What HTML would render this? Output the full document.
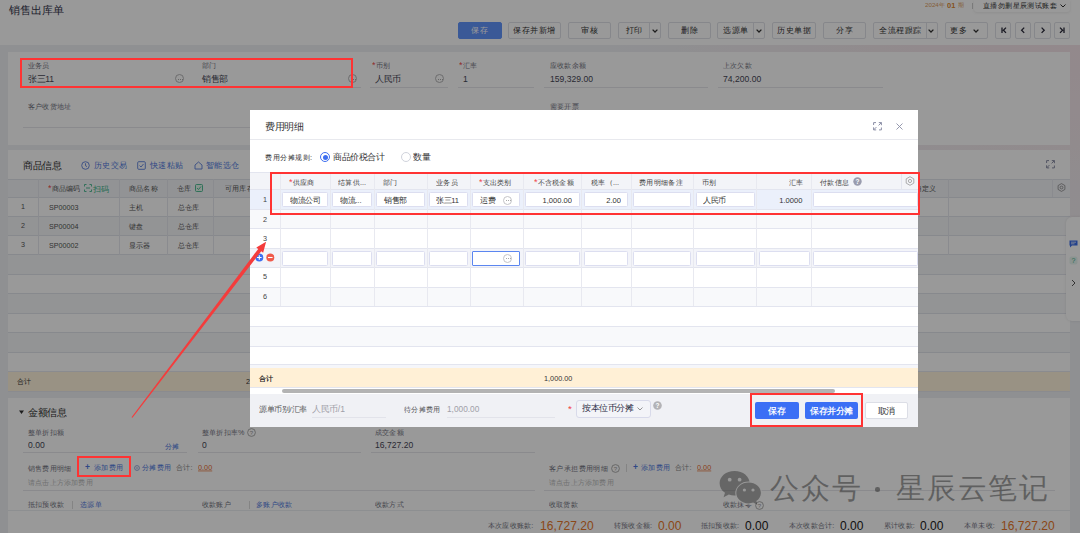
<!DOCTYPE html>
<html><head><meta charset="utf-8">
<style>
*{box-sizing:border-box;margin:0;padding:0}
html,body{width:1080px;height:533px;overflow:hidden}
body{position:relative;background:radial-gradient(ellipse 480px 320px at 100% 0%, #f6e2e8 0%, #f2e8ec 45%, #eef0f4 100%);font-family:"Liberation Sans",sans-serif;color:#333;}
.a{position:absolute}
.t{position:absolute;white-space:nowrap;line-height:1}
.lbl{font-size:7.2px;color:#727280}
.val{font-size:8.6px;color:#464656}
.ul{position:absolute;height:1px;background:#e6e7ec}
.btn{position:absolute;top:22px;height:17px;border:1px solid #e0e2e8;border-radius:2px;background:#fff;font-size:8.3px;line-height:15px;text-align:center;color:#333}
.sep{position:absolute;top:0;bottom:0;width:1px;background:#e0e2e8}
.dots{position:absolute;width:9px;height:9px;border:1px solid #b5b5b8;border-radius:50%;margin-top:-0.7px}
.dots:after{content:"";position:absolute;left:1.5px;top:3.2px;width:1px;height:1px;background:#aaa;box-shadow:2px 0 #aaa,4px 0 #aaa}
.blue{color:#5079e0}
.red{color:#f04848;font-size:1.25em;line-height:0}
.card{position:absolute;left:8px;width:1062px;background:#fff}
.hl{position:absolute;left:8px;width:1062px;height:1px;background:#e2e4ec}
.vl{position:absolute;width:1px;background:#e6e8ee}
</style></head><body>

<!-- ===== HEADER ===== -->
<div class="a" style="left:0;top:0;width:1080px;height:45px;background:#fff"></div>
<div class="t" style="left:9px;top:5.3px;color:#33334a;font-size:110px;transform-origin:0 0;transform:scale(0.1,0.1)">销售出库单</div>
<div class="a" style="left:974px;top:0;width:96px;height:12px;background:#fff;border-radius:0 0 3px 3px;box-shadow:0 1px 3px rgba(0,0,0,.08)"></div>
<div class="t" style="left:924.7px;top:2.3px;color:#e0a060;font-size:62px;transform-origin:0 0;transform:scale(0.1,0.1)">2024年</div><div class="t" style="left:947px;top:2px;font-weight:bold;color:#e08a30;font-size:75px;transform-origin:0 0;transform:scale(0.1,0.1)">01</div><div class="t" style="left:958.3px;top:2.3px;color:#e0a060;font-size:62px;transform-origin:0 0;transform:scale(0.1,0.1)">期</div>
<div class="a" style="left:972px;top:2.5px;width:1px;height:6px;background:#ccc"></div>
<div class="t" style="left:983px;top:2px;color:#333;font-size:74px;transform-origin:0 0;transform:scale(0.1,0.1)">直播勿删星辰测试账套</div>
<svg class="a" style="left:1060px;top:3.5px" width="6" height="4" viewBox="0 0 6 4"><path d="M0.5 0.5 L3 3 L5.5 0.5" fill="none" stroke="#333" stroke-width="1"/></svg>

<div class="btn" style="left:458px;width:43.5px;background:#6294fc;border-color:#6294fc"><div class="t" style="left:0;top:0;width:415px;line-height:150px;text-align:center;color:#fff;font-size:85px;transform-origin:0 0;transform:scale(0.1,0.1)">保存</div></div>
<div class="btn" style="left:508px;width:52.5px;"><div class="t" style="left:0;top:0;width:505px;line-height:150px;text-align:center;color:#333;font-size:85px;transform-origin:0 0;transform:scale(0.1,0.1)">保存并新增</div></div>
<div class="btn" style="left:567.5px;width:43px;"><div class="t" style="left:0;top:0;width:410px;line-height:150px;text-align:center;color:#333;font-size:85px;transform-origin:0 0;transform:scale(0.1,0.1)">审核</div></div>
<div class="btn" style="left:617.5px;width:43px;"><div class="t" style="left:0;top:0;width:305px;line-height:150px;text-align:center;color:#333;font-size:85px;transform-origin:0 0;transform:scale(0.1,0.1)">打印</div><div class="sep" style="left:30.2px"></div><svg class="a" style="left:33.3px;top:5.8px" width="6" height="4" viewBox="0 0 6 4"><path d="M0.6 0.6 L3 3 L5.4 0.6" fill="none" stroke="#333" stroke-width="1.3"/></svg></div>
<div class="btn" style="left:667.5px;width:43px;"><div class="t" style="left:0;top:0;width:410px;line-height:150px;text-align:center;color:#333;font-size:85px;transform-origin:0 0;transform:scale(0.1,0.1)">删除</div></div>
<div class="btn" style="left:717px;width:48px;"><div class="t" style="left:0;top:0;width:360px;line-height:150px;text-align:center;color:#333;font-size:85px;transform-origin:0 0;transform:scale(0.1,0.1)">选源单</div><div class="sep" style="left:35.2px"></div><svg class="a" style="left:38px;top:5.8px" width="6" height="4" viewBox="0 0 6 4"><path d="M0.6 0.6 L3 3 L5.4 0.6" fill="none" stroke="#333" stroke-width="1.3"/></svg></div>
<div class="btn" style="left:771.5px;width:44.5px;"><div class="t" style="left:0;top:0;width:425px;line-height:150px;text-align:center;color:#333;font-size:85px;transform-origin:0 0;transform:scale(0.1,0.1)">历史单据</div></div>
<div class="btn" style="left:822.5px;width:43px;"><div class="t" style="left:0;top:0;width:410px;line-height:150px;text-align:center;color:#333;font-size:85px;transform-origin:0 0;transform:scale(0.1,0.1)">分享</div></div>
<div class="btn" style="left:872.5px;width:65px;"><div class="t" style="left:0;top:0;width:525px;line-height:150px;text-align:center;color:#333;font-size:85px;transform-origin:0 0;transform:scale(0.1,0.1)">全流程跟踪</div><div class="sep" style="left:52.8px"></div><svg class="a" style="left:54.7px;top:5.8px" width="6" height="4" viewBox="0 0 6 4"><path d="M0.6 0.6 L3 3 L5.4 0.6" fill="none" stroke="#333" stroke-width="1.3"/></svg></div>
<div class="btn" style="left:944.5px;width:43px;"><div class="t" style="left:4.5px;top:0;line-height:150px;color:#333;font-size:85px;transform-origin:0 0;transform:scale(0.1,0.1)">更多</div><svg class="a" style="left:27.8px;top:5.8px" width="6" height="4" viewBox="0 0 6 4"><path d="M0.6 0.6 L3 3 L5.4 0.6" fill="none" stroke="#333" stroke-width="1.3"/></svg></div>
<div class="btn" style="left:995.3px;width:16px"><svg class="a" style="left:4.5px;top:4px" width="6" height="6.5" viewBox="0 0 6 6.5"><path d="M1 0.5 V6 M5 0.6 L2.4 3.25 L5 5.9" fill="none" stroke="#2a2a3a" stroke-width="1.3"/></svg></div>
<div class="btn" style="left:1014.5px;width:16px"><svg class="a" style="left:4.8px;top:4px" width="6" height="6.5" viewBox="0 0 6 6.5"><path d="M4.2 0.6 L1.6 3.25 L4.2 5.9" fill="none" stroke="#2a2a3a" stroke-width="1.3"/></svg></div>
<div class="btn" style="left:1034px;width:16.5px"><svg class="a" style="left:5px;top:4px" width="6" height="6.5" viewBox="0 0 6 6.5"><path d="M1.6 0.6 L4.2 3.25 L1.6 5.9" fill="none" stroke="#2a2a3a" stroke-width="1.3"/></svg></div>
<div class="btn" style="left:1053.8px;width:16px"><svg class="a" style="left:4.5px;top:4px" width="6" height="6.5" viewBox="0 0 6 6.5"><path d="M5 0.5 V6 M1 0.6 L3.6 3.25 L1 5.9" fill="none" stroke="#2a2a3a" stroke-width="1.3"/></svg></div>

<!-- ===== CARD 1 ===== -->
<div class="card" style="top:52px;height:93px"></div>
<div class="t lbl" style="left:28px;top:62px;font-size:72px;transform-origin:0 0;transform:scale(0.1,0.1)">业务员</div>
<div class="t val" style="left:28px;top:74.5px;font-size:86px;transform-origin:0 0;transform:scale(0.1,0.1)">张三11</div>
<div class="dots" style="left:175px;top:75px"></div>
<div class="ul" style="left:23px;top:87px;width:165px"></div>
<div class="t lbl" style="left:202px;top:62px;font-size:72px;transform-origin:0 0;transform:scale(0.1,0.1)">部门</div>
<div class="t val" style="left:202px;top:74.5px;font-size:86px;transform-origin:0 0;transform:scale(0.1,0.1)">销售部</div>
<div class="dots" style="left:348px;top:75px"></div>
<div class="ul" style="left:197.5px;top:87px;width:163px"></div>
<div class="t lbl" style="left:372px;top:62px;font-size:72px;transform-origin:0 0;transform:scale(0.1,0.1)"><span class="red">*</span>币别</div>
<div class="t val" style="left:375px;top:74.5px;font-size:86px;transform-origin:0 0;transform:scale(0.1,0.1)">人民币</div>
<div class="dots" style="left:435px;top:75px"></div>
<div class="ul" style="left:370px;top:87px;width:77.5px"></div>
<div class="t lbl" style="left:459px;top:62px;font-size:72px;transform-origin:0 0;transform:scale(0.1,0.1)"><span class="red">*</span>汇率</div>
<div class="t val" style="left:463px;top:74.5px;font-size:86px;transform-origin:0 0;transform:scale(0.1,0.1)">1</div>
<div class="ul" style="left:457.5px;top:87px;width:76.5px"></div>
<div class="t lbl" style="left:549.5px;top:62px;font-size:72px;transform-origin:0 0;transform:scale(0.1,0.1)">应收款余额</div>
<div class="t val" style="left:549.5px;top:74.5px;font-size:86px;transform-origin:0 0;transform:scale(0.1,0.1)">159,329.00</div>
<div class="ul" style="left:544px;top:87px;width:163.5px"></div>
<div class="t lbl" style="left:723px;top:62px;font-size:72px;transform-origin:0 0;transform:scale(0.1,0.1)">上次欠款</div>
<div class="t val" style="left:723px;top:74.5px;font-size:86px;transform-origin:0 0;transform:scale(0.1,0.1)">74,200.00</div>
<div class="ul" style="left:718px;top:87px;width:164.5px"></div>
<div class="t lbl" style="left:28px;top:103px;font-size:72px;transform-origin:0 0;transform:scale(0.1,0.1)">客户收货地址</div>
<div class="ul" style="left:23px;top:127px;width:511px"></div>
<div class="t lbl" style="left:549.5px;top:103px;font-size:72px;transform-origin:0 0;transform:scale(0.1,0.1)">需要开票</div>

<!-- ===== CARD 2 (products) ===== -->
<div class="card" style="top:150px;height:241px"></div>
<div class="t" style="left:23px;top:160.5px;color:#333;font-size:96px;transform-origin:0 0;transform:scale(0.1,0.1)">商品信息</div>
<!-- links -->
<svg class="a" style="left:81px;top:161px" width="9" height="9" viewBox="0 0 9 9"><circle cx="4.5" cy="4.5" r="3.8" fill="none" stroke="#5b80dc" stroke-width="0.9"/><path d="M4.5 2.3 V4.7 L6 5.6" fill="none" stroke="#5b80dc" stroke-width="0.9"/></svg>
<div class="t blue" style="left:94px;top:161px;font-size:83px;transform-origin:0 0;transform:scale(0.1,0.1)">历史交易</div>
<svg class="a" style="left:137px;top:161px" width="9" height="9" viewBox="0 0 9 9"><rect x="0.7" y="0.7" width="7.6" height="7.6" rx="1" fill="none" stroke="#5b80dc" stroke-width="0.9"/><path d="M2.5 4.5 L4 6 L6.5 3" fill="none" stroke="#5b80dc" stroke-width="0.9"/></svg>
<div class="t blue" style="left:149.5px;top:161px;font-size:83px;transform-origin:0 0;transform:scale(0.1,0.1)">快速粘贴</div>
<svg class="a" style="left:194px;top:161px" width="9" height="9" viewBox="0 0 9 9"><path d="M1 8 V4 L4.5 1 L8 4 V8 Z" fill="none" stroke="#5b80dc" stroke-width="0.9"/></svg>
<div class="t blue" style="left:205.5px;top:161px;font-size:83px;transform-origin:0 0;transform:scale(0.1,0.1)">智能选仓</div>
<svg class="a" style="left:1046px;top:160px" width="9" height="8.5" viewBox="0 0 9 8.5"><path d="M0.6 3 V0.6 H3 M5.8 0.6 H8.4 V3.2 M8.4 0.6 L5.6 3.4 M0.6 5.3 V7.9 H3.2 M0.6 7.9 L3.4 5.1 M8.4 5.5 V7.9 H6" fill="none" stroke="#8b8ea6" stroke-width="1"/></svg>

<!-- table header -->
<div class="a" style="left:8px;top:179px;width:1062px;height:18px;background:#f4f5f9"></div>
<div class="hl" style="top:179px"></div>
<div class="hl" style="top:197px"></div>
<div class="vl" style="left:38.25px;top:179px;height:76px"></div>
<div class="vl" style="left:119.25px;top:179px;height:76px"></div>
<div class="vl" style="left:167.25px;top:179px;height:76px"></div>
<div class="vl" style="left:213.25px;top:179px;height:76px"></div>
<div class="vl" style="left:948px;top:179px;height:76px"></div>
<div class="vl" style="left:1052px;top:179px;height:18px"></div>
<div class="t lbl" style="left:47.5px;top:185px;color:#555;font-size:72px;transform-origin:0 0;transform:scale(0.1,0.1)"><span class="red">*</span>商品编码</div>
<svg class="a" style="left:84px;top:184px" width="8" height="8" viewBox="0 0 8 8"><path d="M0.5 2.5 V0.5 H2.5 M5.5 0.5 H7.5 V2.5 M7.5 5.5 V7.5 H5.5 M2.5 7.5 H0.5 V5.5 M2 4 H6" fill="none" stroke="#40b58a" stroke-width="0.9"/></svg>
<div class="t" style="left:93px;top:185px;color:#40b58a;font-size:82px;transform-origin:0 0;transform:scale(0.1,0.1)">扫码</div>
<div class="t lbl" style="left:129px;top:185px;color:#555;font-size:72px;transform-origin:0 0;transform:scale(0.1,0.1)">商品名称</div>
<div class="t lbl" style="left:177px;top:185px;color:#555;font-size:72px;transform-origin:0 0;transform:scale(0.1,0.1)">仓库</div>
<svg class="a" style="left:194.5px;top:183.5px" width="8" height="8" viewBox="0 0 8 8"><rect x="0.5" y="0.5" width="7" height="7" rx="1" fill="#e3f4ec" stroke="#40b58a" stroke-width="0.9"/><path d="M2 4 L3.5 5.5 L6 2.5" fill="none" stroke="#40b58a" stroke-width="0.9"/></svg>
<div class="t lbl" style="left:225px;top:185px;color:#555;font-size:72px;transform-origin:0 0;transform:scale(0.1,0.1)">可用库存</div>
<div class="t lbl" style="left:915px;top:185px;color:#555;font-size:72px;transform-origin:0 0;transform:scale(0.1,0.1)">自定义</div>
<svg class="a" style="left:1057px;top:183px" width="9" height="9" viewBox="0 0 9 9"><path d="M4.5 0.6 L7.9 2.55 V6.45 L4.5 8.4 L1.1 6.45 V2.55 Z" fill="none" stroke="#888" stroke-width="0.8"/><circle cx="4.5" cy="4.5" r="1.4" fill="none" stroke="#888" stroke-width="0.8"/></svg>
<!-- rows -->
<div class="a" style="left:8px;top:215.5px;width:1062px;height:19.5px;background:#f6f7f9"></div><div class="a" style="left:8px;top:254px;width:1062px;height:20px;background:#f6f7f9"></div><div class="a" style="left:8px;top:293px;width:1062px;height:20px;background:#f6f7f9"></div><div class="a" style="left:8px;top:332px;width:1062px;height:20px;background:#f6f7f9"></div>
<div class="hl" style="top:215.5px"></div>
<div class="hl" style="top:235px"></div>
<div class="hl" style="top:254px"></div><div class="vl" style="left:38.25px;top:215px;height:40px"></div><div class="vl" style="left:119.25px;top:215px;height:40px"></div><div class="vl" style="left:167.25px;top:215px;height:40px"></div><div class="vl" style="left:213.25px;top:215px;height:40px"></div><div class="vl" style="left:948px;top:215px;height:40px"></div>
<div class="hl" style="top:274px"></div>
<div class="hl" style="top:293px"></div>
<div class="hl" style="top:313px"></div>
<div class="hl" style="top:332px"></div>
<div class="hl" style="top:352px"></div>
<div class="t lbl" style="left:21px;top:202.8px;color:#555;font-size:72px;transform-origin:0 0;transform:scale(0.1,0.1)">1</div>
<div class="t lbl" style="left:49px;top:203.8px;color:#555;font-size:72px;transform-origin:0 0;transform:scale(0.1,0.1)">SP00003</div>
<div class="t lbl" style="left:129px;top:203.8px;color:#555;font-size:72px;transform-origin:0 0;transform:scale(0.1,0.1)">主机</div>
<div class="t lbl" style="left:178px;top:203.8px;color:#555;font-size:72px;transform-origin:0 0;transform:scale(0.1,0.1)">总仓库</div>
<div class="t lbl" style="left:21px;top:221.8px;color:#555;font-size:72px;transform-origin:0 0;transform:scale(0.1,0.1)">2</div>
<div class="t lbl" style="left:49px;top:222.8px;color:#555;font-size:72px;transform-origin:0 0;transform:scale(0.1,0.1)">SP00004</div>
<div class="t lbl" style="left:129px;top:222.8px;color:#555;font-size:72px;transform-origin:0 0;transform:scale(0.1,0.1)">键盘</div>
<div class="t lbl" style="left:178px;top:222.8px;color:#555;font-size:72px;transform-origin:0 0;transform:scale(0.1,0.1)">总仓库</div>
<div class="t lbl" style="left:21px;top:241.2px;color:#555;font-size:72px;transform-origin:0 0;transform:scale(0.1,0.1)">3</div>
<div class="t lbl" style="left:49px;top:242.2px;color:#555;font-size:72px;transform-origin:0 0;transform:scale(0.1,0.1)">SP00002</div>
<div class="t lbl" style="left:129px;top:242.2px;color:#555;font-size:72px;transform-origin:0 0;transform:scale(0.1,0.1)">显示器</div>
<div class="t lbl" style="left:178px;top:242.2px;color:#555;font-size:72px;transform-origin:0 0;transform:scale(0.1,0.1)">总仓库</div>
<!-- sum row -->
<div class="a" style="left:8px;top:371px;width:1062px;height:20.5px;background:#fff3dc;border-top:1px solid #e6e8ee;border-bottom:1px solid #e6e8ee"></div>
<div class="t lbl" style="left:17px;top:377.5px;color:#333;font-size:72px;transform-origin:0 0;transform:scale(0.1,0.1)">合计</div>
<div class="t lbl" style="left:246px;top:377.5px;color:#333;font-size:72px;transform-origin:0 0;transform:scale(0.1,0.1)">2</div>

<!-- right float -->
<div class="a" style="left:1066px;top:217px;width:16px;height:104px;background:#fff;border-radius:6px 0 0 6px;box-shadow:0 0 3px rgba(0,0,0,.1)"></div>
<svg class="a" style="left:1069px;top:240px" width="9" height="8" viewBox="0 0 9 8"><path d="M0.5 0.5 H8.5 V5.5 H3 L1 7.5 V5.5 H0.5 Z" fill="#3d6ee8"/><path d="M2 2.2 H7 M2 3.8 H5.5" stroke="#fff" stroke-width="0.7"/></svg>
<svg class="a" style="left:1069px;top:256px" width="9" height="9" viewBox="0 0 9 9"><rect x="0.5" y="0.5" width="8" height="8" rx="2" fill="#e7f5f0"/><text x="4.5" y="7.3" font-size="7" text-anchor="middle" fill="#3cb38a" font-family="Liberation Sans">?</text></svg>
<svg class="a" style="left:1071px;top:279px" width="5" height="8" viewBox="0 0 5 8"><path d="M1 1 L4 4 L1 7" fill="none" stroke="#555" stroke-width="1"/></svg>

<!-- ===== CARD 3 (amount) ===== -->
<div class="card" style="top:397.5px;height:136px"></div>
<svg class="a" style="left:18.5px;top:409.8px" width="5" height="4.5" viewBox="0 0 5 4.5"><path d="M0 0.4 H5 L2.5 4 Z" fill="#333"/></svg>
<div class="t" style="left:28px;top:408px;color:#333;font-size:96px;transform-origin:0 0;transform:scale(0.1,0.1)">金额信息</div>
<div class="t lbl" style="left:28px;top:429px;font-size:72px;transform-origin:0 0;transform:scale(0.1,0.1)">整单折扣额</div>
<div class="t val" style="left:28px;top:440.5px;font-size:86px;transform-origin:0 0;transform:scale(0.1,0.1)">0.00</div>
<div class="t blue" style="left:165px;top:443px;font-size:73px;transform-origin:0 0;transform:scale(0.1,0.1)">分摊</div>
<div class="ul" style="left:23px;top:452px;width:164px"></div>
<div class="t lbl" style="left:202px;top:429px;font-size:72px;transform-origin:0 0;transform:scale(0.1,0.1)">整单折扣率%</div>
<svg class="a" style="left:246.8px;top:427.6px" width="9" height="9" viewBox="0 0 9 9"><circle cx="4.5" cy="4.5" r="3.9" fill="none" stroke="#999" stroke-width="0.8"/><text x="4.5" y="7" font-size="6" text-anchor="middle" fill="#999" font-family="Liberation Sans">?</text></svg>
<div class="t val" style="left:202px;top:440.5px;font-size:86px;transform-origin:0 0;transform:scale(0.1,0.1)">0</div>
<div class="ul" style="left:197.5px;top:452px;width:163px"></div>
<div class="t lbl" style="left:375px;top:429px;font-size:72px;transform-origin:0 0;transform:scale(0.1,0.1)">成交金额</div>
<div class="t val" style="left:375px;top:440.5px;font-size:86px;transform-origin:0 0;transform:scale(0.1,0.1)">16,727.20</div>
<div class="ul" style="left:370.5px;top:452px;width:164px"></div>

<div class="t lbl" style="left:28px;top:464.5px;font-size:72px;transform-origin:0 0;transform:scale(0.1,0.1)">销售费用明细</div>
<div class="t blue" style="left:85px;top:463.3px;font-weight:bold;font-size:85px;transform-origin:0 0;transform:scale(0.1,0.1)">+</div><div class="t blue" style="left:94px;top:464.3px;font-size:73px;transform-origin:0 0;transform:scale(0.1,0.1)">添加费用</div>
<svg class="a" style="left:133.5px;top:465px" width="6" height="6" viewBox="0 0 6 6"><circle cx="3" cy="3" r="2.4" fill="none" stroke="#8aa0d8" stroke-width="0.9"/><circle cx="3" cy="3" r="0.8" fill="#8aa0d8"/></svg>
<div class="t blue" style="left:142px;top:464.3px;font-size:73px;transform-origin:0 0;transform:scale(0.1,0.1)">分摊费用</div>
<div class="t lbl" style="left:176px;top:463.8px;color:#888;font-size:72px;transform-origin:0 0;transform:scale(0.1,0.1)">合计:</div>
<div class="t" style="left:198px;top:463.9px;color:#e86a2c;text-decoration:underline;font-size:73px;transform-origin:0 0;transform:scale(0.1,0.1)">0.00</div>
<div class="t lbl" style="left:28px;top:478.5px;color:#bbb;font-size:72px;transform-origin:0 0;transform:scale(0.1,0.1)">请点击上方添加费用</div>
<div class="ul" style="left:23px;top:490px;width:511.5px"></div>

<div class="t lbl" style="left:549px;top:464.5px;font-size:74px;transform-origin:0 0;transform:scale(0.1,0.1)">客户承担费用明细</div>
<svg class="a" style="left:610.5px;top:463.5px" width="9" height="9" viewBox="0 0 9 9"><circle cx="4.5" cy="4.5" r="3.9" fill="none" stroke="#999" stroke-width="0.8"/><text x="4.5" y="7" font-size="6" text-anchor="middle" fill="#999" font-family="Liberation Sans">?</text></svg>
<div class="a" style="left:626px;top:464px;width:1px;height:8px;background:#ddd"></div>
<div class="t blue" style="left:632.5px;top:463.3px;font-weight:bold;font-size:85px;transform-origin:0 0;transform:scale(0.1,0.1)">+</div><div class="t blue" style="left:641px;top:464.3px;font-size:73px;transform-origin:0 0;transform:scale(0.1,0.1)">添加费用</div>
<div class="t lbl" style="left:675px;top:463.8px;color:#888;font-size:72px;transform-origin:0 0;transform:scale(0.1,0.1)">合计:</div>
<div class="t" style="left:697px;top:463.9px;color:#e86a2c;text-decoration:underline;font-size:73px;transform-origin:0 0;transform:scale(0.1,0.1)">0.00</div>
<div class="t lbl" style="left:549px;top:478.5px;color:#bbb;font-size:72px;transform-origin:0 0;transform:scale(0.1,0.1)">请点击上方添加费用</div>
<div class="ul" style="left:544px;top:490px;width:511px"></div>

<div class="t lbl" style="left:28px;top:501px;font-size:72px;transform-origin:0 0;transform:scale(0.1,0.1)">抵扣预收款</div>
<div class="a" style="left:72px;top:501px;width:1px;height:8px;background:#ddd"></div>
<div class="t blue" style="left:79.5px;top:501px;font-size:73px;transform-origin:0 0;transform:scale(0.1,0.1)">选源单</div>
<div class="t lbl" style="left:202px;top:501px;font-size:72px;transform-origin:0 0;transform:scale(0.1,0.1)">收款账户</div>
<div class="a" style="left:249px;top:501px;width:1px;height:8px;background:#ddd"></div>
<div class="t blue" style="left:256px;top:501px;font-size:73px;transform-origin:0 0;transform:scale(0.1,0.1)">多账户收款</div>
<div class="t lbl" style="left:375px;top:501px;font-size:72px;transform-origin:0 0;transform:scale(0.1,0.1)">收款方式</div>
<div class="t lbl" style="left:549px;top:501px;font-size:72px;transform-origin:0 0;transform:scale(0.1,0.1)">收取货款</div>
<div class="t lbl" style="left:722.5px;top:501px;font-size:72px;transform-origin:0 0;transform:scale(0.1,0.1)">收款抹零</div>
<svg class="a" style="left:755px;top:500.5px" width="9" height="9" viewBox="0 0 9 9"><circle cx="4.5" cy="4.5" r="3.9" fill="none" stroke="#999" stroke-width="0.8"/><text x="4.5" y="7" font-size="6" text-anchor="middle" fill="#999" font-family="Liberation Sans">?</text></svg>
<div class="hl" style="top:510px;background:#eceef2"></div>

<!-- footer summary -->
<div class="t lbl" style="left:487.5px;top:521.5px;font-size:72px;transform-origin:0 0;transform:scale(0.1,0.1)">本次应收账款:</div>
<div class="t" style="left:540px;top:518.5px;color:#e8782a;font-size:130px;transform-origin:0 0;transform:scale(0.093,0.1)">16,727.20</div>
<div class="t lbl" style="left:614px;top:521.5px;font-size:72px;transform-origin:0 0;transform:scale(0.1,0.1)">转预收金额:</div>
<div class="t" style="left:657.5px;top:518.5px;color:#e8782a;font-size:130px;transform-origin:0 0;transform:scale(0.093,0.1)">0.00</div>
<div class="t lbl" style="left:701px;top:521.5px;font-size:72px;transform-origin:0 0;transform:scale(0.1,0.1)">抵扣预收款:</div>
<div class="t" style="left:745px;top:518.5px;color:#222;font-size:130px;transform-origin:0 0;transform:scale(0.093,0.1)">0.00</div>
<div class="t lbl" style="left:789px;top:521.5px;font-size:72px;transform-origin:0 0;transform:scale(0.1,0.1)">本次收款合计:</div>
<div class="t" style="left:840px;top:518.5px;color:#222;font-size:130px;transform-origin:0 0;transform:scale(0.093,0.1)">0.00</div>
<div class="t lbl" style="left:884px;top:521.5px;font-size:72px;transform-origin:0 0;transform:scale(0.1,0.1)">累计收款:</div>
<div class="t" style="left:920px;top:518.5px;color:#222;font-size:130px;transform-origin:0 0;transform:scale(0.093,0.1)">0.00</div>
<div class="t lbl" style="left:964px;top:521.5px;font-size:72px;transform-origin:0 0;transform:scale(0.1,0.1)">本单未收:</div>
<div class="t" style="left:1000.5px;top:518.5px;color:#e8782a;font-size:130px;transform-origin:0 0;transform:scale(0.093,0.1)">16,727.20</div>

<!-- ===== OVERLAY ===== -->
<div class="a" style="left:0;top:0;width:1080px;height:533px;background:rgba(0,0,0,0.4)"></div>

<!-- ===== MODAL ===== -->
<div id="modal" class="a" style="left:250px;top:110px;width:668px;height:317px;background:#fff;overflow:hidden"></div>
<div class="t" style="left:265px;top:122px;color:#333;font-size:96px;transform-origin:0 0;transform:scale(0.1,0.1)">费用明细</div>
<svg class="a" style="left:872.5px;top:122px" width="9" height="8.5" viewBox="0 0 9 8.5"><path d="M0.6 3 V0.6 H3 M5.8 0.6 H8.4 V3.2 M8.4 0.6 L5.6 3.4 M0.6 5.3 V7.9 H3.2 M0.6 7.9 L3.4 5.1 M8.4 5.5 V7.9 H6" fill="none" stroke="#8b8ea6" stroke-width="1"/></svg>
<svg class="a" style="left:896px;top:122.5px" width="7" height="7" viewBox="0 0 7 7"><path d="M0.5 0.5 L6.5 6.5 M6.5 0.5 L0.5 6.5" fill="none" stroke="#8b8ea6" stroke-width="0.9"/></svg>
<div class="a" style="left:250px;top:139px;width:668px;height:1px;background:#e8e9ee"></div>
<div class="t" style="left:265px;top:154px;color:#333;font-size:75px;transform-origin:0 0;transform:scale(0.1,0.1)">费用分摊规则:</div>
<div class="a" style="left:320px;top:152px;width:10px;height:10px;border:1px solid #3d6ef0;border-radius:50%;background:#fff"></div>
<div class="a" style="left:322.5px;top:154.5px;width:5px;height:5px;border-radius:50%;background:#3d6ef0"></div>
<div class="t" style="left:333px;top:153px;color:#333;font-size:86px;transform-origin:0 0;transform:scale(0.1,0.1)">商品价税合计</div>
<div class="a" style="left:400.5px;top:152px;width:10px;height:10px;border:1px solid #d0d3dc;border-radius:50%;background:#fff"></div>
<div class="t" style="left:413px;top:153px;color:#333;font-size:86px;transform-origin:0 0;transform:scale(0.1,0.1)">数量</div>
<div class="a" style="left:250px;top:172px;width:668px;height:17px;background:#f3f4f8"></div>
<div class="a" style="left:250px;top:189px;width:668px;height:20px;background:#ebf0fb"></div>
<div class="a" style="left:250px;top:209px;width:668px;height:19px;background:#f8f9fb"></div>
<div class="a" style="left:250px;top:228px;width:668px;height:20px;background:#fff"></div>
<div class="a" style="left:250px;top:248px;width:668px;height:19px;background:#f3f4f9"></div>
<div class="a" style="left:250px;top:267px;width:668px;height:20px;background:#fff"></div>
<div class="a" style="left:250px;top:287px;width:668px;height:19px;background:#f8f9fb"></div>
<div class="a" style="left:250px;top:306px;width:668px;height:20px;background:#fff"></div>
<div class="a" style="left:250px;top:326px;width:668px;height:19.5px;background:#f8f9fb"></div>
<div class="a" style="left:250px;top:345.5px;width:668px;height:18.5px;background:#fff"></div>
<div class="a" style="left:250px;top:364px;width:668px;height:4px;background:#f5f6fa"></div>
<div class="a" style="left:250px;top:172px;width:668px;height:1px;background:#e3e5ef"></div>
<div class="a" style="left:250px;top:189px;width:668px;height:1px;background:#e3e5ef"></div>
<div class="a" style="left:250px;top:209px;width:668px;height:1px;background:#e3e5ef"></div>
<div class="a" style="left:250px;top:228px;width:668px;height:1px;background:#e3e5ef"></div>
<div class="a" style="left:250px;top:248px;width:668px;height:1px;background:#e3e5ef"></div>
<div class="a" style="left:250px;top:267px;width:668px;height:1px;background:#e3e5ef"></div>
<div class="a" style="left:250px;top:287px;width:668px;height:1px;background:#e3e5ef"></div>
<div class="a" style="left:250px;top:306px;width:668px;height:1px;background:#e3e5ef"></div>
<div class="a" style="left:250px;top:326px;width:668px;height:1px;background:#e3e5ef"></div>
<div class="a" style="left:250px;top:345.5px;width:668px;height:1px;background:#e3e5ef"></div>
<div class="a" style="left:250px;top:364px;width:668px;height:1px;background:#e3e5ef"></div>
<div class="a" style="left:280px;top:172px;width:1px;height:134px;background:#e8e9f0"></div>
<div class="a" style="left:329.5px;top:172px;width:1px;height:134px;background:#e8e9f0"></div>
<div class="a" style="left:374px;top:172px;width:1px;height:134px;background:#e8e9f0"></div>
<div class="a" style="left:427px;top:172px;width:1px;height:134px;background:#e8e9f0"></div>
<div class="a" style="left:469.5px;top:172px;width:1px;height:134px;background:#e8e9f0"></div>
<div class="a" style="left:522.5px;top:172px;width:1px;height:134px;background:#e8e9f0"></div>
<div class="a" style="left:581px;top:172px;width:1px;height:134px;background:#e8e9f0"></div>
<div class="a" style="left:630.5px;top:172px;width:1px;height:134px;background:#e8e9f0"></div>
<div class="a" style="left:692.5px;top:172px;width:1px;height:134px;background:#e8e9f0"></div>
<div class="a" style="left:756px;top:172px;width:1px;height:134px;background:#e8e9f0"></div>
<div class="a" style="left:811px;top:172px;width:1px;height:134px;background:#e8e9f0"></div>
<div class="a" style="left:900.5px;top:172px;width:1px;height:17px;background:#e3e5ef"></div>
<div class="t" style="left:289.2px;top:179.3px;color:#444;font-size:73px;transform-origin:0 0;transform:scale(0.1,0.1)"><span class="red">*</span>供应商</div>
<div class="t" style="left:338px;top:179.3px;color:#444;font-size:73px;transform-origin:0 0;transform:scale(0.1,0.1)">结算供...</div>
<div class="t" style="left:382.5px;top:179.3px;color:#444;font-size:73px;transform-origin:0 0;transform:scale(0.1,0.1)">部门</div>
<div class="t" style="left:435.5px;top:179.3px;color:#444;font-size:73px;transform-origin:0 0;transform:scale(0.1,0.1)">业务员</div>
<div class="t" style="left:479px;top:179.3px;color:#444;font-size:73px;transform-origin:0 0;transform:scale(0.1,0.1)"><span class="red">*</span>支出类别</div>
<div class="t" style="left:534px;top:179.3px;color:#444;font-size:73px;transform-origin:0 0;transform:scale(0.1,0.1)"><span class="red">*</span>不含税金额</div>
<div class="t" style="left:590.5px;top:179.3px;color:#444;font-size:73px;transform-origin:0 0;transform:scale(0.1,0.1)">税率（...</div>
<div class="t" style="left:639px;top:179.3px;color:#444;font-size:73px;transform-origin:0 0;transform:scale(0.1,0.1)">费用明细备注</div>
<div class="t" style="left:702px;top:179.3px;color:#444;font-size:73px;transform-origin:0 0;transform:scale(0.1,0.1)">币别</div>
<div class="t" style="left:789px;top:179.3px;color:#444;font-size:73px;transform-origin:0 0;transform:scale(0.1,0.1)">汇率</div>
<div class="t" style="left:820px;top:179.3px;color:#444;font-size:73.5px;transform-origin:0 0;transform:scale(0.1,0.1)">付款信息</div>
<svg class="a" style="left:852.5px;top:177px" width="9" height="9" viewBox="0 0 9 9"><circle cx="4.5" cy="4.5" r="4.2" fill="#9a9cae"/><text x="4.5" y="7.1" font-size="6.5" font-weight="bold" text-anchor="middle" fill="#fff" font-family="Liberation Sans">?</text></svg>
<svg class="a" style="left:905px;top:176px" width="10" height="10" viewBox="0 0 10 10"><path d="M5 0.7 L8.8 2.85 V7.15 L5 9.3 L1.2 7.15 V2.85 Z" fill="none" stroke="#999" stroke-width="0.8"/><circle cx="5" cy="5" r="1.6" fill="none" stroke="#999" stroke-width="0.8"/></svg>
<div class="a" style="left:282px;top:192px;width:45.5px;height:15px;background:#fff;border:1px solid #dcdef0;border-radius:1.5px"></div>
<div class="a" style="left:331.5px;top:192px;width:40.5px;height:15px;background:#fff;border:1px solid #dcdef0;border-radius:1.5px"></div>
<div class="a" style="left:376px;top:192px;width:48.5px;height:15px;background:#fff;border:1px solid #dcdef0;border-radius:1.5px"></div>
<div class="a" style="left:429px;top:192px;width:39px;height:15px;background:#fff;border:1px solid #dcdef0;border-radius:1.5px"></div>
<div class="a" style="left:472px;top:192px;width:48px;height:15px;background:#fff;border:1px solid #dcdef0;border-radius:1.5px"></div>
<div class="a" style="left:524.5px;top:192px;width:55.0px;height:15px;background:#fff;border:1px solid #dcdef0;border-radius:1.5px"></div>
<div class="a" style="left:584px;top:192px;width:44px;height:15px;background:#fff;border:1px solid #dcdef0;border-radius:1.5px"></div>
<div class="a" style="left:632.5px;top:192px;width:58.0px;height:15px;background:#fff;border:1px solid #dcdef0;border-radius:1.5px"></div>
<div class="a" style="left:695.5px;top:192px;width:59.0px;height:15px;background:#fff;border:1px solid #dcdef0;border-radius:1.5px"></div>
<div class="a" style="left:813px;top:192px;width:105px;height:15px;background:#fff;border:1px solid #dcdef0;border-radius:1.5px"></div>
<div class="dots" style="left:503px;top:196.6px;border-color:#c4c4c8"></div>
<div class="a" style="left:282px;top:250.5px;width:45.5px;height:15.0px;background:#fff;border:1px solid #dcdef0;border-radius:1.5px"></div>
<div class="a" style="left:331.5px;top:250.5px;width:40.5px;height:15.0px;background:#fff;border:1px solid #dcdef0;border-radius:1.5px"></div>
<div class="a" style="left:376px;top:250.5px;width:48.5px;height:15.0px;background:#fff;border:1px solid #dcdef0;border-radius:1.5px"></div>
<div class="a" style="left:429px;top:250.5px;width:39px;height:15.0px;background:#fff;border:1px solid #dcdef0;border-radius:1.5px"></div>
<div class="a" style="left:472px;top:250.5px;width:48px;height:15.0px;background:#fff;border:1px solid #5b86f0;border-radius:1px"></div>
<div class="a" style="left:524.5px;top:250.5px;width:55.0px;height:15.0px;background:#fff;border:1px solid #dcdef0;border-radius:1.5px"></div>
<div class="a" style="left:584px;top:250.5px;width:44px;height:15.0px;background:#fff;border:1px solid #dcdef0;border-radius:1.5px"></div>
<div class="a" style="left:632.5px;top:250.5px;width:58.0px;height:15.0px;background:#fff;border:1px solid #dcdef0;border-radius:1.5px"></div>
<div class="a" style="left:695.5px;top:250.5px;width:59.0px;height:15.0px;background:#fff;border:1px solid #dcdef0;border-radius:1.5px"></div>
<div class="a" style="left:758.5px;top:250.5px;width:51px;height:15.0px;background:#fff;border:1px solid #dcdef0;border-radius:1.5px"></div>
<div class="a" style="left:813px;top:250.5px;width:105px;height:15.0px;background:#fff;border:1px solid #dcdef0;border-radius:1.5px"></div>
<div class="dots" style="left:503px;top:254.8px;border-color:#c4c4c8"></div>
<div class="t" style="left:290px;top:197px;color:#333;font-size:76px;transform-origin:0 0;transform:scale(0.1,0.1)">物流公司</div>
<div class="t" style="left:339.5px;top:197px;color:#333;font-size:76px;transform-origin:0 0;transform:scale(0.1,0.1)">物流...</div>
<div class="t" style="left:384px;top:197px;color:#333;font-size:76px;transform-origin:0 0;transform:scale(0.1,0.1)">销售部</div>
<div class="t" style="left:436px;top:197px;color:#333;font-size:76px;transform-origin:0 0;transform:scale(0.1,0.1)">张三11</div>
<div class="t" style="left:480px;top:197px;color:#333;font-size:76px;transform-origin:0 0;transform:scale(0.1,0.1)">运费</div>
<div class="t" style="left:540px;top:197px;color:#333;width:320px;text-align:right;font-size:76px;transform-origin:0 0;transform:scale(0.1,0.1)">1,000.00</div>
<div class="t" style="left:600px;top:197px;color:#333;width:210px;text-align:right;font-size:76px;transform-origin:0 0;transform:scale(0.1,0.1)">2.00</div>
<div class="t" style="left:703px;top:197px;color:#333;font-size:76px;transform-origin:0 0;transform:scale(0.1,0.1)">人民币</div>
<div class="t" style="left:770px;top:197px;color:#333;width:325px;text-align:right;font-size:76px;transform-origin:0 0;transform:scale(0.1,0.1)">1.0000</div>
<div class="t" style="left:262px;top:195.8px;width:60px;text-align:center;color:#444;font-size:73px;transform-origin:0 0;transform:scale(0.1,0.1)">1</div>
<div class="t" style="left:262px;top:215.5px;width:60px;text-align:center;color:#444;font-size:73px;transform-origin:0 0;transform:scale(0.1,0.1)">2</div>
<div class="t" style="left:262px;top:235px;width:60px;text-align:center;color:#444;font-size:73px;transform-origin:0 0;transform:scale(0.1,0.1)">3</div>
<div class="t" style="left:262px;top:273.2px;width:60px;text-align:center;color:#444;font-size:73px;transform-origin:0 0;transform:scale(0.1,0.1)">5</div>
<div class="t" style="left:262px;top:292.6px;width:60px;text-align:center;color:#444;font-size:73px;transform-origin:0 0;transform:scale(0.1,0.1)">6</div>
<svg class="a" style="left:255px;top:253px" width="20" height="9" viewBox="0 0 20 9"><circle cx="4.3" cy="4.5" r="4" fill="#3d6ef0"/><path d="M4.3 2.2 V6.8 M2 4.5 H6.6" stroke="#fff" stroke-width="1.1"/><circle cx="15.3" cy="4.5" r="4" fill="#f05a4a"/><path d="M13 4.5 H17.6" stroke="#fff" stroke-width="1.1"/></svg>
<div class="a" style="left:250px;top:368px;width:668px;height:19px;background:#fff0d6"></div>
<div class="a" style="left:250px;top:387px;width:668px;height:1px;background:#e3e5ef"></div>
<div class="t" style="left:258.5px;top:375px;color:#222;font-weight:bold;font-size:73px;transform-origin:0 0;transform:scale(0.1,0.1)">合计</div>
<div class="t" style="left:544px;top:375px;color:#333;font-size:73px;transform-origin:0 0;transform:scale(0.1,0.1)">1,000.00</div>
<div class="a" style="left:250px;top:388px;width:668px;height:5.5px;background:#fff"></div>
<div class="a" style="left:281.5px;top:389px;width:553px;height:4px;background:#b3b3b3;border-radius:2px"></div>
<div class="a" style="left:250px;top:393.5px;width:668px;height:33.5px;background:#f0f1f5"></div>
<div class="t" style="left:259px;top:405.5px;color:#555;font-size:76px;transform-origin:0 0;transform:scale(0.1,0.1)">源单币别/汇率</div>
<div class="t" style="left:312px;top:404.5px;color:#a0a0a8;font-size:86px;transform-origin:0 0;transform:scale(0.1,0.1)">人民币/1</div>
<div class="a" style="left:312px;top:417px;width:74px;height:1px;background:#e2e3ea"></div>
<div class="t" style="left:404px;top:405.5px;color:#555;font-size:73px;transform-origin:0 0;transform:scale(0.1,0.1)">待分摊费用</div>
<div class="t" style="left:447px;top:404.5px;color:#a0a0a8;font-size:83px;transform-origin:0 0;transform:scale(0.1,0.1)">1,000.00</div>
<div class="a" style="left:447px;top:417px;width:108px;height:1px;background:#e2e3ea"></div>
<div class="t" style="left:568.3px;top:403.3px;color:#f04040;font-size:100px;transform-origin:0 0;transform:scale(0.1,0.1)">*</div>
<div class="a" style="left:576px;top:400px;width:75px;height:18px;background:#f3f4f8;border:1px solid #d8daea;border-radius:3px"></div>
<div class="t" style="left:582px;top:404.4px;color:#2f3048;font-size:86px;transform-origin:0 0;transform:scale(0.1,0.1)">按本位币分摊</div>
<svg class="a" style="left:637px;top:407px" width="6" height="4" viewBox="0 0 6 4"><path d="M0.5 0.5 L3 3 L5.5 0.5" fill="none" stroke="#888" stroke-width="0.9"/></svg>
<svg class="a" style="left:653px;top:401px" width="9" height="9" viewBox="0 0 9 9"><circle cx="4.5" cy="4.5" r="4.3" fill="#b3b3b6"/><text x="4.5" y="7.2" font-size="6.5" font-weight="bold" text-anchor="middle" fill="#fff" font-family="Liberation Sans">?</text></svg>
<div class="a" style="left:755px;top:402px;width:44px;height:17px;background:#3b6ff5;border-radius:2px"><div class="t" style="left:0;top:0;width:440px;line-height:170px;text-align:center;color:#fff;font-weight:bold;font-size:87px;transform-origin:0 0;transform:scale(0.1,0.1)">保存</div></div>
<div class="a" style="left:805px;top:402px;width:53px;height:17px;background:#3b6ff5;border-radius:2px"><div class="t" style="left:0;top:0;width:530px;line-height:170px;text-align:center;color:#fff;font-weight:bold;font-size:86px;transform-origin:0 0;transform:scale(0.1,0.1)">保存并分摊</div></div>
<div class="a" style="left:865px;top:402px;width:42.5px;height:17px;background:#fff;border:1px solid #dcdee6;border-radius:2px"><div class="t" style="left:0;top:0;width:405px;line-height:150px;text-align:center;color:#333;font-size:86px;transform-origin:0 0;transform:scale(0.1,0.1)">取消</div></div>

<!-- ===== ANNOTATIONS ===== -->
<div class="a" style="left:20px;top:58px;width:333px;height:30px;border:2px solid #f33"></div>
<div class="a" style="left:270px;top:172px;width:649.5px;height:42.5px;border:2px solid #f33"></div>
<div class="a" style="left:76.7px;top:456.2px;width:54.8px;height:21px;border:2px solid #f33"></div>
<div class="a" style="left:750px;top:393px;width:113px;height:34px;border:2px solid #f33"></div>

<svg class="a" style="left:0;top:0" width="1080" height="533" viewBox="0 0 1080 533"><path d="M132.48 417.86 L261.24 251.20 L263.15 252.66 L266.10 241.70 L256.31 247.44 L258.22 248.90 L131.52 417.14 Z" fill="#f43c3c"/></svg>
<svg class="a" style="left:715px;top:468px" width="50" height="40" viewBox="715 468 50 40">
<path d="M734.6 471 C726 471 719.6 476.5 719.6 483.3 C719.6 487.2 721.7 490.6 725 492.8 L723.6 497.3 L728.8 494.5 C730.6 495.1 732.5 495.5 734.6 495.5 C743 495.5 749.6 490 749.6 483.3 C749.6 476.5 743 471 734.6 471 Z" fill="rgba(40,40,40,0.45)"/>
<ellipse cx="748.6" cy="493" rx="13.3" ry="11.4" fill="#999"/>
<path d="M748.6 482.6 C741.8 482.6 736.3 487.3 736.3 493 C736.3 498.7 741.8 503.4 748.6 503.4 C750.2 503.4 751.8 503.1 753.2 502.6 L757.4 504.8 L756.3 501 C759.1 499.1 760.9 496.2 760.9 493 C760.9 487.3 755.4 482.6 748.6 482.6 Z" fill="rgba(40,40,40,0.45)"/>
<circle cx="729.7" cy="479.7" r="1.9" fill="#999"/><circle cx="739.6" cy="479.7" r="1.9" fill="#999"/>
<circle cx="744.4" cy="490" r="1.6" fill="#999"/><circle cx="753" cy="490" r="1.6" fill="#999"/>
</svg>
<div class="t" style="left:770px;top:473.2px;letter-spacing:14px;font-weight:500;color:rgba(40,40,40,0.5);font-size:295px;transform-origin:0 0;transform:scale(0.1,0.1)">公众号</div>
<div class="a" style="left:875.2px;top:487.2px;width:4.5px;height:4.5px;border-radius:50%;background:rgba(40,40,40,0.5)"></div>
<div class="t" style="left:895.5px;top:473.2px;letter-spacing:13px;font-weight:500;color:rgba(40,40,40,0.5);font-size:295px;transform-origin:0 0;transform:scale(0.1,0.1)">星辰云笔记</div>
</body></html>
